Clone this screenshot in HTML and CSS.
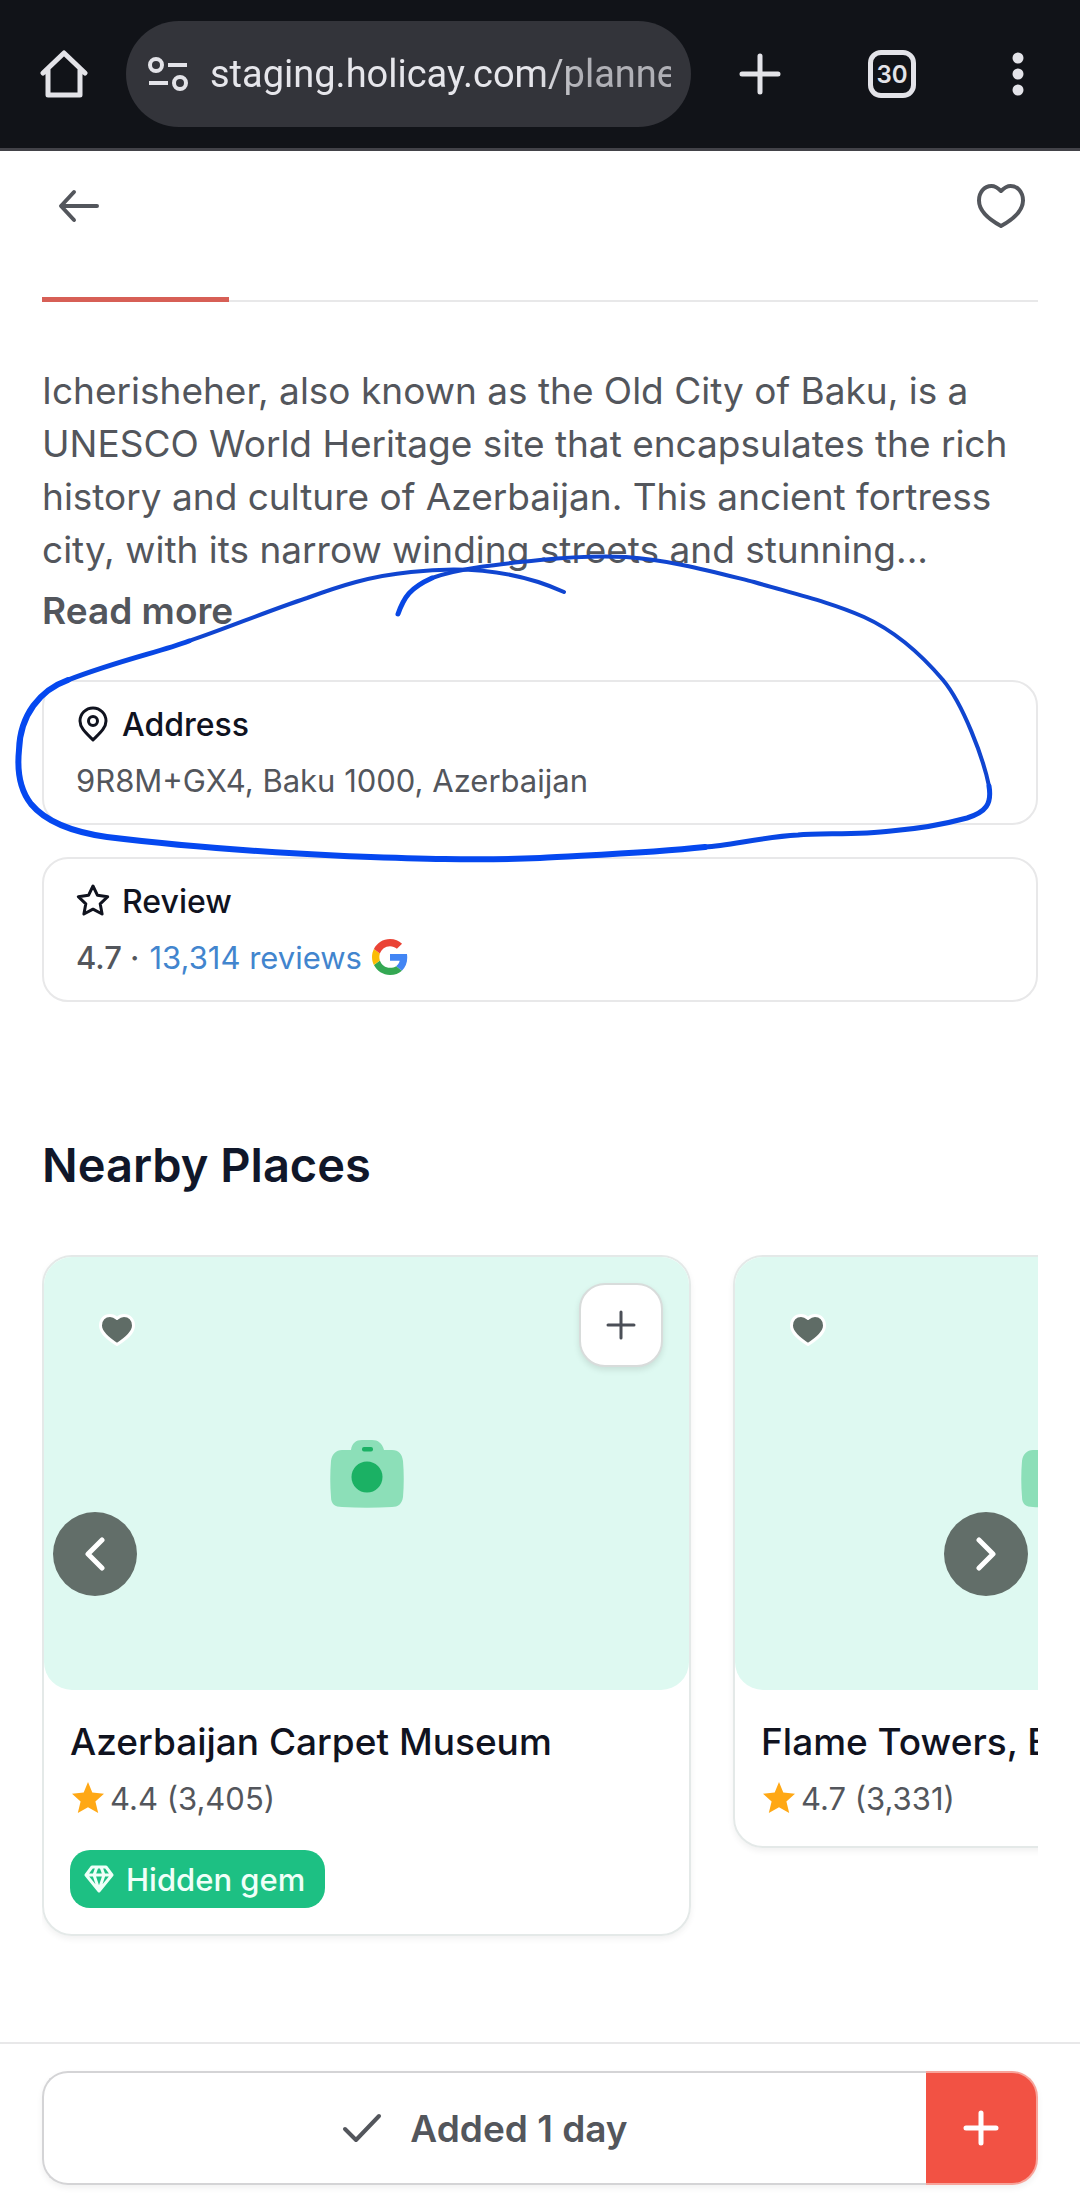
FILE: index.html
```html
<!DOCTYPE html>
<html lang="en">
<head>
<meta charset="utf-8">
<meta name="viewport" content="width=device-width, initial-scale=1">
<title>Icherisheher</title>
<link rel="stylesheet" href="styles.css">
</head>
<body>
<svg width="0" height="0" class="sprite" aria-hidden="true">
  <symbol id="camera" viewBox="0 0 74 68">
    <path d="M12 10h9C22 3 26 0 32 0h10c6 0 10 3 12 10h8c7 0 10 4 11 11 1 12 1 24 0 36-1 7-5 10-11 10-17 1-33 1-50 0C5 67 1 64 1 57 0 45 0 33 1 21c1-7 5-11 11-11z" fill="#8CDFB8"/>
    <circle cx="37" cy="37" r="15.500" fill="#1BB164"/>
    <rect x="32" y="7" width="11" height="4.500" rx="2" fill="#1BB164"/>
  </symbol>
  <symbol id="heart" viewBox="0 0 38 38">
    <path d="M19 7.500C17 5.500 15 4.500 12 4.500 6.500 4.500 2.500 8.500 2.500 14.500c0 7 6.500 12.500 16.500 19 10-6.500 16.500-12 16.500-19 0-6-4-10-9.500-10-3 0-5 1-7 3z" fill="#5F6C66" stroke="#fff" stroke-width="3" stroke-linejoin="round"/>
  </symbol>
  <symbol id="star" viewBox="0 0 32 32">
    <path d="M16 0l4.300 10.600L32 11.800l-8.600 7.700L26.200 31 16 25.300 5.800 31l2.800-11.500L0 11.800l11.700-1.200z" fill="#FFA815"/>
  </symbol>
</svg>

<header class="browser">
  <button class="bar-btn home" aria-label="Home">
    <svg width="48" height="48" viewBox="0 0 48 48" fill="none" stroke="#E3E3E8" stroke-width="5" stroke-linejoin="round" stroke-linecap="round"><path d="M3 23L24 3l21 20M8 19v26h32V19"/></svg>
  </button>
  <div class="address-bar">
    <svg width="40" height="34" viewBox="0 0 40 34" fill="none" stroke="#E3E3E8" stroke-width="4"><circle cx="8" cy="8" r="6"/><circle cx="32" cy="26" r="6"/><path d="M20 8h19M1 26h19"/></svg>
    <input type="text" class="url" aria-label="Address bar" value="staging.holicay.com/planner">
  </div>
  <div class="bar-actions">
    <button class="bar-btn" aria-label="New tab">
      <svg width="42" height="42" viewBox="0 0 42 42" stroke="#E3E3E8" stroke-width="5" stroke-linecap="round"><path d="M3 21h36M21 3v36"/></svg>
    </button>
    <button class="bar-btn tab-count" aria-label="Tabs">30</button>
    <button class="bar-btn menu" aria-label="Menu">
      <svg width="12" height="44" viewBox="0 0 12 44" fill="#E3E3E8"><circle cx="6" cy="6" r="5.500"/><circle cx="6" cy="22" r="5.500"/><circle cx="6" cy="38" r="5.500"/></svg>
    </button>
  </div>
</header>

<main class="page">
  <div class="topbar">
    <button class="icon-btn" aria-label="Back">
      <svg width="42" height="34" viewBox="0 0 42 34" fill="none" stroke="#53565C" stroke-width="4" stroke-linecap="round" stroke-linejoin="round"><path d="M39 17H4M16 3L3 17l13 14"/></svg>
    </button>
    <button class="icon-btn" aria-label="Save">
      <svg width="48" height="44" viewBox="0 0 48 44" fill="none" stroke="#53565C" stroke-width="4" stroke-linejoin="round"><path d="M24 7C21 4 18 2 14.500 2 7 2 2 8.500 2 16.500 2 27 13 36 24 42c11-6 22-15 22-25.500C46 8.500 41 2 33.500 2 30 2 27 4 24 7z"/></svg>
    </button>
  </div>
  <div class="tabs"><span class="tab-active"></span></div>

  <section class="about">
    <p class="summary">Icherisheher, also known as the Old City of Baku, is a UNESCO World Heritage site that encapsulates the rich history and culture of Azerbaijan. This ancient fortress city, with its narrow winding streets and stunning...</p>
    <button class="read-more">Read more</button>
    <div class="info">
      <h3 class="info-title">
        <svg width="34" height="36" viewBox="0 0 34 36" fill="none" stroke="#10131F" stroke-width="3" stroke-linejoin="round"><path d="M17 34C10 27 4 22 4 15a13 13 0 0 1 26 0c0 7-6 12-13 19z"/><circle cx="17" cy="15" r="4.500"/></svg>
        Address
      </h3>
      <p class="info-text">9R8M+GX4, Baku 1000, Azerbaijan</p>
    </div>
    <div class="info">
      <h3 class="info-title">
        <svg width="34" height="36" viewBox="0 0 34 36" fill="none" stroke="#10131F" stroke-width="3" stroke-linejoin="round"><path d="M17 3l4.500 9.300 10.200 1.400-7.500 7.100 1.900 10.200L17 26.200 7.900 31l1.900-10.200-7.500-7.100 10.200-1.400z"/></svg>
        Review
      </h3>
      <p class="info-text"><span class="score">4.7 ·</span> <a href="#reviews">13,314 reviews</a>
        <svg class="google" width="36" height="36" viewBox="0 0 48 48"><path fill="#4285F4" d="M46.980 24.550c0-1.570-.15-3.090-.38-4.550H24v9.020h12.940c-.58 2.960-2.260 5.480-4.780 7.180l7.730 6c4.510-4.180 7.090-10.360 7.090-17.650z"/><path fill="#34A853" d="M24 48c6.480 0 11.930-2.130 15.890-5.810l-7.730-6c-2.150 1.450-4.920 2.300-8.160 2.300-6.260 0-11.570-4.220-13.470-9.910l-7.980 6.190C6.510 42.620 14.620 48 24 48z"/><path fill="#FBBC05" d="M10.530 28.590c-.48-1.450-.76-2.990-.76-4.590s.27-3.140.76-4.590l-7.980-6.190C.92 16.460 0 20.120 0 24s.92 7.540 2.560 10.780z"/><path fill="#EA4335" d="M24 9.500c3.540 0 6.710 1.220 9.210 3.600l6.850-6.850C35.900 2.380 30.470 0 24 0 14.620 0 6.510 5.380 2.560 13.220l7.980 6.190C12.430 13.720 17.740 9.500 24 9.500z"/></svg>
      </p>
    </div>
    <svg class="scribble" width="1000" height="330" viewBox="0 540 1000 330" fill="none" stroke-linecap="round" aria-hidden="true">
      <g stroke="#1045D0" stroke-width="4">
        <path d="M432 578C460 568 500 564 540 560 570 557 605 556 626 557 670 560 710 571 754 582 795 594 830 602 864 617 895 631 920 653 943 680 963 704 983 757 989 786"/>
        <path d="M189 641C230 627 265 612 307 598 340 586 370 576 411 572 470 565 520 572 564 592"/>
      </g>
      <g stroke="#0847E4" stroke-width="5">
        <path d="M398 614C404 597 410 588 432 578"/>
        <path d="M989 786C992 804 986 812 967 818 945 824 915 829 891 831 860 835 820 833 798 835 760 837 730 846 705 847"/>
        <path d="M68 680C120 660 160 652 189 641"/>
      </g>
      <path stroke="#0548F0" stroke-width="6" d="M705 847C650 853 590 855 540 858 470 861 400 858 344 856 260 852 180 846 107 837 72 832 46 822 31 804 20 790 17 770 19 750 20 715 40 690 68 680"/>
    </svg>
  </section>

  <section class="nearby">
    <h2>Nearby Places</h2>
    <div class="carousel">
      <div class="track">
        <article class="card">
          <div class="photo">
            <button class="fav" aria-label="Save place"><svg width="38" height="38"><use href="#heart"/></svg></button>
            <button class="add" aria-label="Add place"><svg width="30" height="30" viewBox="0 0 30 30" stroke="#4B4F57" stroke-width="3" stroke-linecap="round"><path d="M2 15h26M15 2v26"/></svg></button>
            <svg width="74" height="68"><use href="#camera"/></svg>
          </div>
          <div class="card-body">
            <h3>Azerbaijan Carpet Museum</h3>
            <p class="rating"><svg width="32" height="32"><use href="#star"/></svg>4.4 (3,405)</p>
            <span class="badge">
              <svg width="30" height="28" viewBox="0 0 30 28" fill="none" stroke="#F0FFF8" stroke-width="3" stroke-linejoin="round"><path d="M8 2h14l6 8-13 16L2 10zM2 10h26M15 25l-5-15 3-8M15 25l5-15-3-8"/></svg>
              Hidden gem
            </span>
          </div>
        </article>
        <article class="card">
          <div class="photo">
            <button class="fav" aria-label="Save place"><svg width="38" height="38"><use href="#heart"/></svg></button>
            <svg width="74" height="68"><use href="#camera"/></svg>
          </div>
          <div class="card-body">
            <h3>Flame Towers, Baku</h3>
            <p class="rating"><svg width="32" height="32"><use href="#star"/></svg>4.7 (3,331)</p>
          </div>
        </article>
      </div>
      <button class="nav prev" aria-label="Previous"><svg width="20" height="34" viewBox="0 0 20 34" fill="none" stroke="#fff" stroke-width="5" stroke-linecap="round" stroke-linejoin="round"><path d="M17 3L3 17l14 14"/></svg></button>
      <button class="nav next" aria-label="Next"><svg width="20" height="34" viewBox="0 0 20 34" fill="none" stroke="#fff" stroke-width="5" stroke-linecap="round" stroke-linejoin="round"><path d="M3 3l14 14L3 31"/></svg></button>
    </div>
  </section>
</main>

<footer class="footer">
  <div class="split">
    <button class="added"><svg width="40" height="30" viewBox="0 0 40 30" fill="none" stroke="#53565C" stroke-width="4" stroke-linecap="round" stroke-linejoin="round"><path d="M3 16l11 11L37 3"/></svg>Added 1 day</button>
    <button class="plus" aria-label="Add another day"><svg width="36" height="36" viewBox="0 0 36 36" stroke="#fff" stroke-width="5" stroke-linecap="round"><path d="M3 18h30M18 3v30"/></svg></button>
  </div>
</footer>
</body>
</html>
```
FILE: styles.css
```css
* { box-sizing: border-box; }

body {
  margin: 0;
  min-height: 100vh;
  display: flex;
  flex-direction: column;
  background: #fff;
  color: #53565c;
  font-family: Inter, "Liberation Sans", sans-serif;
  font-size: 32px;
}

h2, h3, p { margin: 0; }
svg { display: block; flex: none; }
.sprite { position: absolute; }

button {
  padding: 0;
  border: 0;
  background: none;
  color: inherit;
  font: inherit;
  cursor: pointer;
}

/* Browser bar */
.browser {
  display: flex;
  align-items: center;
  height: 151px;
  padding-left: 40px;
  background: #111318;
  border-bottom: 3px solid #424248;
}
.bar-btn {
  display: flex;
  align-items: center;
  justify-content: center;
}
.address-bar {
  display: flex;
  align-items: center;
  gap: 22px;
  flex: 1;
  min-width: 0;
  height: 106px;
  margin-left: 38px;
  padding: 0 20px 0 22px;
  border-radius: 53px;
  background: #33343a;
}
.url {
  flex: 1;
  min-width: 0;
  padding: 0;
  border: 0;
  outline: 0;
  background: none;
  color: #e6e6eb;
  font: 38px/52px Roboto, sans-serif;
  mask-image: linear-gradient(90deg, #000 70%, rgba(0, 0, 0, .7) 80%);
}
.bar-actions {
  display: flex;
  align-items: center;
  padding: 0 56px 0 48px;
}
.tab-count {
  width: 48px;
  height: 48px;
  margin-left: 87px;
  border: 5px solid #e3e3e8;
  border-radius: 13px;
  color: #e3e3e8;
  font-size: 24px;
  font-weight: 600;
}
.menu { margin-left: 96px; }

/* Page header */
.page { flex: 1; padding: 0 42px; }
.topbar {
  display: flex;
  align-items: center;
  justify-content: space-between;
  height: 110px;
  padding: 0 13px 0 16px;
}
.tabs {
  display: flex;
  align-items: flex-end;
  height: 41px;
  border-bottom: 2px solid #e8e8e9;
}
.tab-active {
  width: 187px;
  height: 5px;
  margin-bottom: -2px;
  background: #d75f56;
}

/* About */
.about { position: relative; padding-top: 62px; }
.summary {
  font-size: 37px;
  line-height: 53px;
}
.read-more {
  display: block;
  height: 52px;
  margin-top: 8px;
  font-size: 37px;
  font-weight: 600;
}
.info {
  height: 145px;
  margin-top: 32px;
  padding: 20px 32px;
  border: 2px solid #e8e8e9;
  border-radius: 26px;
}
.read-more + .info { margin-top: 44px; }
.info-title {
  display: flex;
  align-items: center;
  gap: 12px;
  height: 44px;
  color: #10131f;
  font-size: 32px;
  font-weight: 500;
}
.info-text {
  display: flex;
  align-items: center;
  gap: 10px;
  height: 44px;
  margin-top: 12px;
  font-size: 31px;
}
.info-text a { color: #4285ce; text-decoration: none; }
.score { font-weight: 500; }
.scribble {
  position: absolute;
  top: 238px;
  left: -42px;
  pointer-events: none;
}

/* Nearby places */
.nearby { padding-top: 133px; }
.nearby h2 {
  color: #10172a;
  font-size: 47px;
  font-weight: 600;
  line-height: 60px;
}
.carousel { position: relative; margin-top: 60px; }
.track {
  display: flex;
  align-items: flex-start;
  gap: 42px;
  padding-bottom: 16px;
  overflow: hidden;
}
.card {
  flex: none;
  width: 649px;
  border: 2px solid #e4e9e8;
  border-radius: 30px;
  box-shadow: 0 3px 6px rgba(0, 0, 0, .06);
}
.photo {
  position: relative;
  display: flex;
  align-items: center;
  justify-content: center;
  height: 433px;
  border-radius: 28px;
  background: #def9f1;
}
.fav { position: absolute; top: 54px; left: 54px; }
.add {
  position: absolute;
  top: 26px;
  right: 26px;
  display: flex;
  align-items: center;
  justify-content: center;
  width: 84px;
  height: 84px;
  border: 2px solid #d8dcdb;
  border-radius: 26px;
  background: #fff;
  box-shadow: 0 3px 6px rgba(0, 0, 0, .1);
}
.card-body { padding: 26px; }
.card-body h3 {
  color: #10131f;
  font-size: 37px;
  font-weight: 500;
  line-height: 52px;
  white-space: nowrap;
}
.rating {
  display: flex;
  align-items: center;
  gap: 6px;
  height: 44px;
  margin-top: 8px;
  padding-left: 2px;
  font-size: 31px;
}
.badge {
  display: inline-flex;
  align-items: center;
  gap: 12px;
  height: 58px;
  margin-top: 30px;
  padding: 0 20px 0 14px;
  border-radius: 20px;
  background: #1dc083;
  color: #f0fff8;
  font-size: 31px;
  font-weight: 500;
}
.nav {
  position: absolute;
  top: 257px;
  display: flex;
  align-items: center;
  justify-content: center;
  width: 84px;
  height: 84px;
  border-radius: 50%;
  background: #626e69;
}
.prev { left: 11px; }
.next { right: 10px; }

/* Footer */
.footer {
  padding: 27px 42px;
  border-top: 2px solid #e8e8e9;
  background: #fff;
}
.split {
  display: flex;
  height: 114px;
  border-radius: 26px;
  box-shadow: 0 3px 6px rgba(0, 0, 0, .06);
}
.added {
  display: flex;
  align-items: center;
  justify-content: center;
  gap: 28px;
  flex: 1;
  border: 2px solid #d4d4d6;
  border-right: 0;
  border-radius: 26px 0 0 26px;
  font-size: 37px;
  font-weight: 600;
}
.plus {
  display: flex;
  align-items: center;
  justify-content: center;
  width: 112px;
  border: 2px solid #f7a49b;
  border-left: 0;
  border-radius: 0 26px 26px 0;
  background: #f25244;
}
```
